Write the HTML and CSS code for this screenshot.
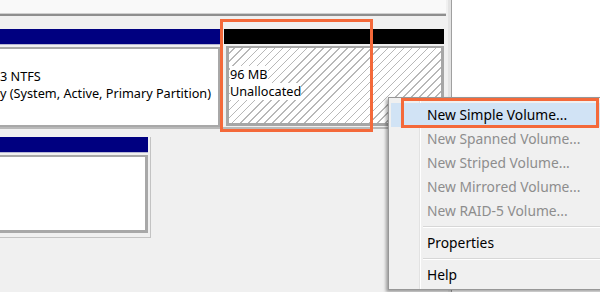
FILE: index.html
```html
<!DOCTYPE html>
<html lang="en">
  <head>
    <meta charset="UTF-8" />
    <title>Disk Management</title>
    <link rel="stylesheet" href="styles.css">
  </head>
  <body>
    <div class="window">
      <div class="disk-pane">
        <div class="list-bottom"></div>

        <div class="disk-row">
          <div class="partition part-system">
            <div class="bar bar-primary"></div>
            <div class="part-box">
              <div class="part-text">
                <span>3 NTFS</span>
                <span>y (System, Active, Primary Partition)</span>
              </div>
            </div>
          </div>
          <div class="partition part-free">
            <div class="bar bar-free"></div>
            <div class="part-box hatched">
              <div class="part-text">
                <span>96 MB</span>
                <span>Unallocated</span>
              </div>
            </div>
          </div>
        </div>

        <div class="disk-row second">
          <div class="partition part-small">
            <div class="bar bar-primary"></div>
            <div class="part-box"></div>
          </div>
        </div>
      </div>
      <div class="side-pane"></div>

      <div class="mark mark-free"></div>

      <ul class="menu">
        <li class="item active">New Simple Volume...</li>
        <li class="item disabled">New Spanned Volume...</li>
        <li class="item disabled">New Striped Volume...</li>
        <li class="item disabled">New Mirrored Volume...</li>
        <li class="item disabled">New RAID-5 Volume...</li>
        <li class="sep"></li>
        <li class="item">Properties</li>
        <li class="sep"></li>
        <li class="item">Help</li>
      </ul>

      <div class="mark mark-item"></div>
    </div>
  </body>
</html>
```

FILE: styles.css
```css
body {
  margin: 0;
  font-family: "Noto Sans", "Open Sans", sans-serif;
  background-color: #f0f0f0;
}
.window {
  position: relative;
  display: flex;
  width: 600px;
  height: 292px;
  overflow: hidden;
}
.disk-pane {
  width: 451px;
  flex-shrink: 0;
  background-color: #f0f0f0;
  border-right: 1px solid #a0a0a0;
  box-shadow: inset -3px 0 0 #e3e3e3;
}
.side-pane {
  flex: 1;
  background-color: #fff;
}
.list-bottom {
  height: 13px;
  background-color: #f9f9f9;
  border-bottom: 1px solid #cfcfcf;
  box-shadow: 0 2px 0 #8e8e8e;
  margin-right: 5px;
}
.disk-row {
  display: flex;
  gap: 4px;
  padding: 15px 0 0;
  height: 98px;
  border-bottom: 2px solid #b9b9b9;
  margin-right: 7px;
}
.disk-row.second {
  padding-top: 8px;
  height: 100px;
  border-bottom: none;
}
.partition {
  display: flex;
  flex-direction: column;
  gap: 2px;
}
.part-system {
  width: 220px;
}
.part-free {
  width: 220px;
}
.part-small {
  width: 148px;
  padding-right: 2px;
  border-right: 1px solid #c3c3c3;
  border-bottom: 1px solid #c3c3c3;
  height: 100px;
}
.bar {
  height: 15px;
}
.bar-primary {
  background-color: #000080;
  border-bottom: 1px solid #b7b7d4;
}
.bar-free {
  background-color: #000;
}
.part-box {
  height: 76px;
  background-color: #fff;
  border: 2px solid #a8a8a8;
  border-left: none;
  display: flex;
  align-items: center;
}
.part-small .part-box {
  height: 73px;
  border-right-width: 3px;
  border-bottom-width: 3px;
}
.part-box.hatched {
  border: 3px solid #a6a6a6;
  border-top-width: 2px;
  height: 75px;
  margin-left: 2px;
  background-color: #fff;
  background-image: repeating-linear-gradient(
    -45deg,
    #fff 0,
    #fff 4.6px,
    #b8b8b8 4.6px,
    #b8b8b8 5.7px
  );
}
.part-text {
  display: flex;
  flex-direction: column;
  font-size: 12.7px;
  line-height: 17px;
  color: #000;
  padding: 0 0 5px;
}
.hatched .part-text {
  padding-left: 1px;
}
.part-text span {
  background-color: #fff;
  align-self: flex-start;
  white-space: nowrap;
}
.mark {
  position: absolute;
  border: 3px solid #f4693a;
}
.mark-free {
  left: 220px;
  top: 19px;
  width: 147px;
  height: 107px;
}
.mark-item {
  left: 401px;
  top: 98px;
  width: 192px;
  height: 24px;
}
.menu {
  position: absolute;
  left: 388px;
  top: 97px;
  width: 240px;
  margin: 0;
  padding: 5px 0 2px 2px;
  list-style: none;
  background-color: #f0f0f0;
  border: 1px solid #979797;
  box-shadow: -2px 2px 3px rgba(0, 0, 0, 0.35);
  background-image: linear-gradient(
    to right,
    #f0f0f0 30px,
    #e2e2e2 30px,
    #e2e2e2 31px,
    #fff 31px,
    #fff 32px,
    #f0f0f0 32px
  );
}
.item {
  height: 24px;
  line-height: 24px;
  padding-left: 36px;
  font-size: 13.8px;
  color: #000;
  white-space: nowrap;
}
.item.active {
  background-color: #d1e3f5;
}
.item.disabled {
  color: #8d8d8d;
}
.sep {
  height: 1px;
  margin: 3px 0 3px 32px;
  background-color: #d7d7d7;
  border-bottom: 1px solid #fff;
}
```
